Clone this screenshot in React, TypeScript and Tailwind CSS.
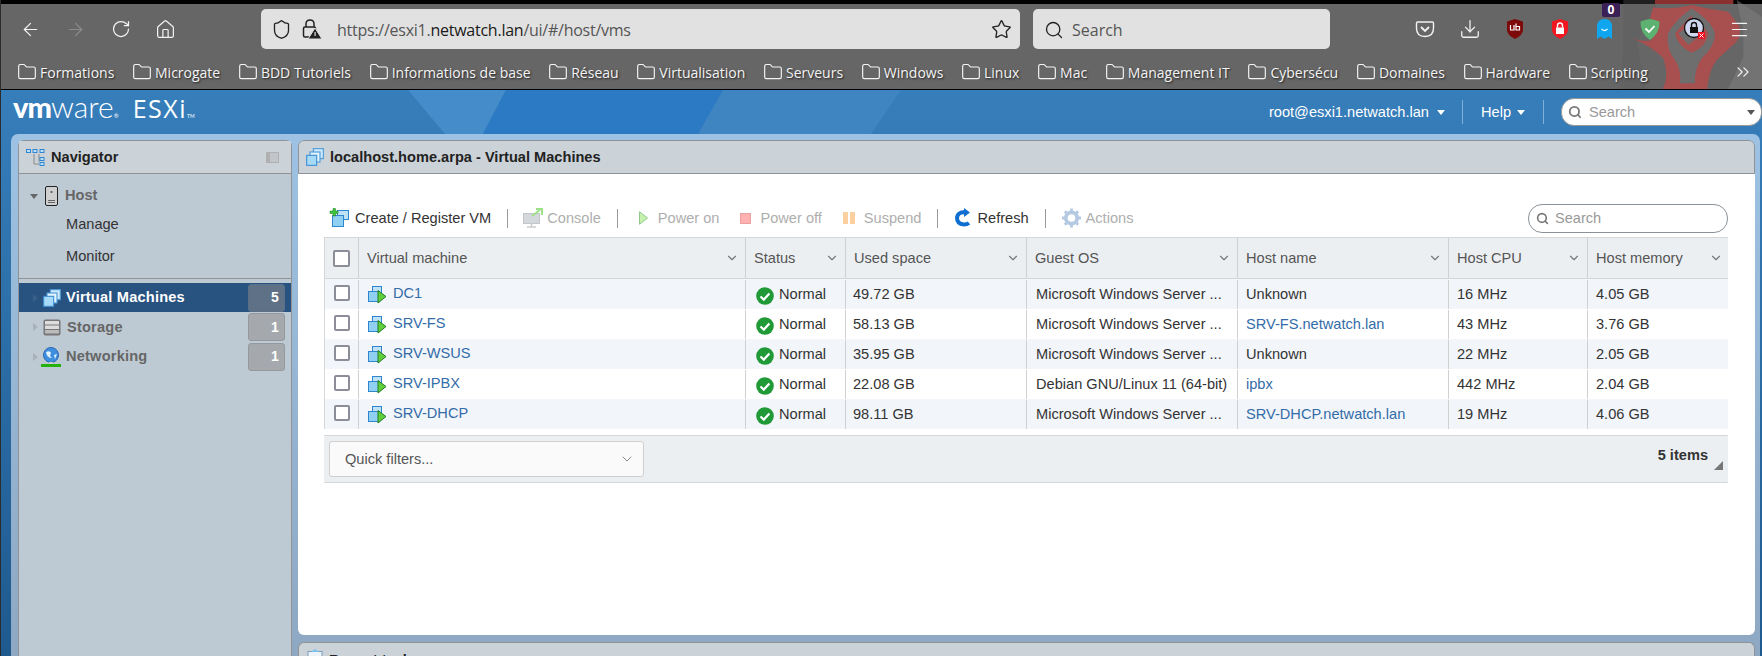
import { ArrowLeft, ArrowRight, ChevronDown, ChevronsRight, Download, Folder, Home, Menu, RotateCw, Search, Shield, Star } from "lucide-react"

const bookmarks = ["Formations", "Microgate", "BDD Tutoriels", "Informations de base", "Réseau", "Virtualisation", "Serveurs", "Windows", "Linux", "Mac", "Management IT", "Cybersécu", "Domaines", "Hardware", "Scripting"]

const columns = ["Virtual machine", "Status", "Used space", "Guest OS", "Host name", "Host CPU", "Host memory"]

const WINDOWS = "Microsoft Windows Server ..."

const vms = [
  { name: "DC1", used: "49.72 GB", os: WINDOWS, host: "Unknown", link: false, cpu: "16 MHz", mem: "4.05 GB" },
  { name: "SRV-FS", used: "58.13 GB", os: WINDOWS, host: "SRV-FS.netwatch.lan", link: true, cpu: "43 MHz", mem: "3.76 GB" },
  { name: "SRV-WSUS", used: "35.95 GB", os: WINDOWS, host: "Unknown", link: false, cpu: "22 MHz", mem: "2.05 GB" },
  { name: "SRV-IPBX", used: "22.08 GB", os: "Debian GNU/Linux 11 (64-bit)", host: "ipbx", link: true, cpu: "442 MHz", mem: "2.04 GB" },
  { name: "SRV-DHCP", used: "98.11 GB", os: WINDOWS, host: "SRV-DHCP.netwatch.lan", link: true, cpu: "19 MHz", mem: "4.06 GB" },
]

const GRID = "grid grid-cols-[34px_387px_100px_181px_211px_211px_139px_141px]"

function VmsIcon({ size = 20 }: { size?: number }) {
  return (
    <svg width={size} height={size} viewBox="0 0 18 18" className="shrink-0">
      <rect x="7.5" y="1.5" width="9" height="9" fill="#cfe9fa" stroke="#4a9ad8" />
      <rect x="4.5" y="4.5" width="9" height="9" fill="#e2f3fc" stroke="#4a9ad8" />
      <rect x="1.5" y="7.5" width="9" height="9" fill="#a6daf6" stroke="#3f90d2" />
    </svg>
  )
}

function VmOnIcon() {
  return (
    <svg width="19" height="18" viewBox="0 0 19 18" className="shrink-0">
      <rect x="4.5" y="0.5" width="9" height="9" fill="#bfe2f8" stroke="#2f86cf" />
      <rect x="0.5" y="5.5" width="11" height="10" fill="#8fd0f3" stroke="#2f86cf" />
      <path d="M10 4.5 L18 10.5 L10 17 Z" fill="#5fce3a" stroke="#1f7d24" />
    </svg>
  )
}

function StatusIcon() {
  return (
    <svg width="18" height="18" viewBox="0 0 18 18" className="mt-[2px] shrink-0">
      <circle cx="9" cy="9" r="8.8" fill="#1f9a37" />
      <path d="M4.5 9.5 L7.8 12.6 L13.4 6.6" fill="none" stroke="#fff" strokeWidth="2.2" />
    </svg>
  )
}

function Caret({ className }: { className: string }) {
  return <span className={`inline-block border-x-[4.5px] border-t-[5px] border-x-transparent ${className}`} />
}

function Sep() {
  return <span className="h-[19px] w-px bg-[#9a9a9a]" />
}

function ToolbarItem({ icon, label, off, gap = "gap-[5px]" }: { icon: React.ReactNode; label: string; off?: boolean; gap?: string }) {
  return (
    <span className={`flex items-center ${gap} ${off ? "text-[#aeaeae]" : "text-[#333]"}`}>
      {icon}
      {label}
    </span>
  )
}

function NavBadge({ n, active }: { n: number; active?: boolean }) {
  return (
    <span className={`flex h-[28px] w-[37px] items-center justify-end rounded-[3px] border pr-[5px] text-[14px] font-bold text-white ${active ? "border-[#5a6f88] bg-[#5f7186]" : "border-[#94999e] bg-[#a5a9ad]"}`}>
      {n}
    </span>
  )
}

function Horde() {
  return (
    <svg width="282" height="92" viewBox="0 0 846 276" className="absolute right-0 top-0">
      <path d="M430 0 H540 L500 60 L470 130 L500 276 H420 L430 140 Z" fill="#5c5c5c" opacity="0.35" />
      <path d="M770 0 L846 50 V276 H740 L790 170 L790 90 Z" fill="#808080" opacity="0.5" />
      <g transform="translate(420 0)">
        <path d="M105 0 H340 V12 H105 Z" fill="#8a3030" />
        <path d="M100 22 Q150 30 215 15 Q280 30 325 35 Q345 60 358 78 Q365 110 345 130 L300 170 Q270 195 262 262 L265 276 H125 L135 250 Q145 215 130 175 Q90 135 35 115 Q70 128 95 120 Q80 70 100 22 Z" fill="#a84f4f" />
        <path d="M215 25 Q155 70 143 105 Q140 150 165 180 Q185 210 180 250 H225 Q222 210 245 175 Q285 140 285 100 Q275 65 215 25 Z" fill="#6e6e6e" />
        <path d="M212 48 L165 100 Q170 130 200 150 L215 158 Q260 140 265 100 Q250 75 212 48 Z" fill="#a84f4f" />
        <path d="M210 75 L175 100 L205 135 L240 105 Z" fill="#6e6e6e" />
      </g>
    </svg>
  )
}

function HeaderShapes() {
  return (
    <svg width="1762" height="44" viewBox="0 0 1762 44" className="absolute left-0 top-0">
      <path d="M407 0 H505 L482 44 H444 Z" fill="#448dca" />
      <path d="M505 0 H722 L697 44 H482 Z" fill="#2c79c4" />
      <path d="M722 0 H900 L870 44 H697 Z" fill="#3f85c2" />
    </svg>
  )
}

export default function App() {
  return (
    <div className="flex h-[656px] w-[1762px] flex-col overflow-hidden border-l border-[#2c2c2c] bg-gradient-to-b from-[#3a84c2] to-[#1f5a8f] font-['Liberation_Sans',Arial,sans-serif] text-[14.6px] text-[#333]">
      {/* browser chrome */}
      <div className="relative -ml-px h-[90px] shrink-0 overflow-hidden border-b border-black bg-[#666] pt-[4px] font-['Open_Sans',sans-serif]">
        <div className="absolute inset-x-0 top-0 h-[4px] bg-black" />
        <Horde />
        <div className="relative flex h-[50px] items-center pl-[8px] pt-[5px] pb-[5px]">
          <div className="flex text-[#f2f2f2]">
            <span className="flex w-[45px] justify-center"><ArrowLeft size={21} strokeWidth={1.4} /></span>
            <span className="flex w-[45px] justify-center text-[#8c8c8c]"><ArrowRight size={21} strokeWidth={1.4} /></span>
            <span className="flex w-[45px] justify-center"><RotateCw size={20} strokeWidth={1.5} /></span>
            <span className="flex w-[45px] justify-center"><Home size={21} strokeWidth={1.4} /></span>
          </div>
          <div className="ml-[73px] flex h-[40px] w-[759px] items-center rounded-[5px] bg-[#e1e1e1] text-[#222]">
            <Shield size={21} strokeWidth={1.5} className="ml-[10px]" />
            <svg width="22" height="22" viewBox="0 0 22 22" className="ml-[9px] shrink-0">
              <path d="M5 9 V6 Q5 2 9 2 Q13 2 13 6 V9" fill="none" stroke="#222" strokeWidth="1.5" />
              <rect x="2.5" y="9" width="12" height="10" rx="1.5" fill="none" stroke="#222" strokeWidth="1.5" />
              <path d="M14 10 L21 21 H7 Z" fill="#222" stroke="#e1e1e1" />
              <rect x="13.5" y="14" width="1.2" height="4" fill="#e1e1e1" />
            </svg>
            <span className="ml-[14px] pt-[1px] text-[16px] tracking-[-0.25px] text-[#555]">https://esxi1.<span className="text-[#1a1a1a]">netwatch.lan</span>/ui/#/host/vms</span>
            <Star size={21} strokeWidth={1.5} className="ml-auto mr-[8px]" />
          </div>
          <div className="ml-[13px] flex h-[40px] w-[297px] items-center rounded-[5px] bg-[#e1e1e1] pt-[1px] text-[16px] text-[#555]">
            <Search size={20} strokeWidth={1.6} className="ml-[11px] text-[#222]" />
            <span className="ml-[8px]">Search</span>
          </div>
          <div className="ml-[72px] flex items-center text-[#f2f2f2]">
            <span className="flex w-[45px] justify-center">
              <svg width="20" height="20" viewBox="0 0 20 20" fill="none" stroke="currentColor" strokeWidth="1.4">
                <path d="M2.5 3 H17.5 Q18.5 3 18.5 4.5 V9 Q18.5 17.5 10 17.5 Q1.5 17.5 1.5 9 V4.5 Q1.5 3 2.5 3 Z" />
                <path d="M6 8 L10 12 L14 8" strokeWidth="1.8" />
              </svg>
            </span>
            <span className="flex w-[45px] justify-center"><Download size={22} strokeWidth={1.4} /></span>
            <span className="flex w-[45px] justify-center">
              <svg width="18" height="20" viewBox="0 0 18 20">
                <path d="M9 0 L17 2.5 V11 Q17 16 9 20 Q1 16 1 11 V2.5 Z" fill="#7d0a0a" />
                <path d="M4.5 6 V11 H8 V6 M10 4.5 V11 H13.5 V7.5 H10" fill="none" stroke="#fff" strokeWidth="1.2" />
              </svg>
            </span>
            <span className="flex w-[45px] justify-center">
              <svg width="18" height="20" viewBox="0 0 18 20">
                <path d="M9 0 L17 2.5 V11 Q17 16 9 20 Q1 16 1 11 V2.5 Z" fill="#f01820" />
                <rect x="5" y="8.5" width="8" height="6.5" fill="#fff" />
                <path d="M6.5 8.5 V6.5 Q6.5 4 9 4 Q11.5 4 11.5 6.5 V8.5" fill="none" stroke="#fff" strokeWidth="1.4" />
              </svg>
            </span>
            <span className="relative flex w-[45px] justify-center">
              <svg width="15" height="20" viewBox="0 0 15 20">
                <path d="M7.5 0 Q15 0 15 8 V20 L11.5 17.5 L7.5 20 L3.5 17.5 L0 20 V8 Q0 0 7.5 0 Z" fill="#0fa6ef" />
                <path d="M4.5 10 Q7.5 13 10.5 10" fill="none" stroke="#dff4ff" strokeWidth="1.4" />
              </svg>
              <span className="absolute -top-[16px] left-[20px] flex h-[14px] w-[18px] items-center justify-center rounded-[2px] bg-[#3b1f57] text-[12px] font-bold leading-none text-white">0</span>
            </span>
            <span className="flex w-[45px] justify-center">
              <svg width="20" height="21" viewBox="0 0 20 21">
                <path d="M10 0 Q15 0.5 19.5 2.5 Q20 14 10 21 Q0 14 0.5 2.5 Q5 0.5 10 0 Z" fill="#5cb270" />
                <path d="M5.5 9.5 L9 13 L14.5 7" fill="none" stroke="#fff" strokeWidth="1.8" />
              </svg>
            </span>
            <span className="flex w-[45px] justify-center">
              <svg width="22" height="22" viewBox="0 0 22 22">
                <circle cx="10" cy="10" r="9.5" fill="#cfd8ee" stroke="#111" strokeWidth="1.3" />
                <rect x="6" y="9" width="8" height="6" fill="#111" />
                <path d="M7.5 9 V7 Q7.5 4.5 10 4.5 Q12.5 4.5 12.5 7 V9" fill="none" stroke="#111" strokeWidth="1.4" />
                <rect x="14" y="14" width="7" height="7" fill="#ee1122" />
                <path d="M15.5 15.5 L19.5 19.5 M19.5 15.5 L15.5 19.5" stroke="#fff" strokeWidth="1" />
              </svg>
            </span>
            <span className="flex w-[45px] justify-center"><Menu size={21} strokeWidth={1.4} /></span>
          </div>
        </div>
        <div className="relative flex h-[35px] items-center pl-[17px] pt-[1px] text-[14px] text-[#f4f4f4] [text-shadow:1px_1px_2px_#222]">
          {bookmarks.map((b) => (
            <span key={b} className="mr-[17.7px] flex items-center gap-[3px]">
              <Folder size={20} strokeWidth={1.4} />
              {b}
            </span>
          ))}
          <ChevronsRight size={20} strokeWidth={1.4} className="absolute left-[1733px]" />
        </div>
      </div>

      {/* esxi header */}
      <div className="relative flex h-[44px] shrink-0 items-center pl-[12px] text-white">
        <HeaderShapes />
        <div className="relative flex items-baseline pt-[4px] font-['Lato',sans-serif]">
          <span className="text-[29px] font-black leading-none tracking-[-1px]">vm</span>
          <span className="text-[30px] font-light leading-none">ware</span>
          <span className="mb-[14px] text-[6px]">®</span>
          <span className="ml-[14px] font-['Open_Sans',sans-serif] text-[25px] leading-none tracking-[1.5px]">ESXi</span>
          <span className="mb-[16px] text-[5px]">TM</span>
        </div>
        <div className="relative ml-auto flex items-center">
          <span className="pt-[2px]">root@esxi1.netwatch.lan</span>
          <Caret className="ml-[8px] border-t-white" />
          <span className="ml-[17px] h-[24px] w-px bg-[#7fb0d8]" />
          <span className="ml-[18px] pt-[2px]">Help</span>
          <Caret className="ml-[6px] border-t-white" />
          <span className="ml-[18px] h-[24px] w-px bg-[#7fb0d8]" />
          <div className="ml-[17px] flex h-[28px] w-[201px] items-center rounded-[13px] border border-[#999] bg-white text-[#999]">
            <Search size={14} strokeWidth={3} className="ml-[6px] text-[#777]" />
            <span className="ml-[7px] pt-[1px]">Search</span>
            <Caret className="ml-auto mr-[6px] border-t-[#555]" />
          </div>
        </div>
      </div>

      {/* workspace */}
      <div className="ml-[10px] mr-[2px] flex min-h-0 flex-1 gap-[6px] rounded-t-[7px] bg-gradient-to-b from-[#9dc2e3] to-[#8ea8c3] pl-[7px] pr-[5px] pt-[6px]">
        <div className="flex w-[274px] shrink-0 flex-col rounded-t-[6px] border border-b-0 border-[#8f9397] bg-[#bdc9d3]">
          <div className="flex h-[33px] shrink-0 items-center border-b border-[#8f9397] bg-[#ccd3d8] pl-[7px] pr-[12px] font-bold text-[#222]">
            <svg width="20" height="18" viewBox="0 0 20 18" className="shrink-0">
              <path d="M13 6 V14 M8 6 V16 H13" fill="none" stroke="#888" />
              <g fill="#bde0f7" stroke="#2f86cf">
                <rect x="0.5" y="1.5" width="4" height="3" />
                <rect x="7" y="1.5" width="4" height="3" />
                <rect x="14" y="1.5" width="4" height="3" />
                <rect x="14" y="9.5" width="4" height="3" />
                <rect x="14" y="14.5" width="4" height="3" />
              </g>
            </svg>
            <span className="ml-[5px] pt-[2px]">Navigator</span>
            <span className="ml-auto h-[11px] w-[13px] border border-[#b0b0b0] border-l-[4px] bg-[#c2c6ca]" />
          </div>
          <div className="mt-[10px] flex h-[24px] shrink-0 items-center pl-[11px] font-bold text-[#666]">
            <Caret className="border-t-[#666]" />
            <svg width="13" height="20" viewBox="0 0 13 20" className="ml-[7px] shrink-0">
              <rect x="0.5" y="0.5" width="12" height="19" rx="1.5" fill="#cfcfcf" stroke="#222" />
              <rect x="3" y="14" width="7" height="1" fill="#666" />
              <rect x="3" y="16" width="7" height="1" fill="#666" />
              <rect x="5.5" y="5" width="2" height="2" fill="#666" />
            </svg>
            <span className="ml-[7px]">Host</span>
          </div>
          <div className="flex h-[32px] shrink-0 items-center pl-[47px] pt-[1px] text-[#333]">Manage</div>
          <div className="flex h-[33px] shrink-0 items-center pl-[47px] pt-[1px] text-[#333]">Monitor</div>
          <div className="mt-[5px] h-[5px] shrink-0 border-t border-[#8f9397]" />
          <div className="flex h-[29px] shrink-0 items-center bg-[#28527f] pl-[14px] pr-[6px] font-bold tracking-[0.2px] text-white">
            <span className="border-y-[4.5px] border-l-[5px] border-y-transparent border-l-[#3a5f88]" />
            <span className="ml-[4px]"><VmsIcon /></span>
            <span className="ml-[4px] pt-[1px]">Virtual Machines</span>
            <span className="ml-auto"><NavBadge n={5} active /></span>
          </div>
          <div className="flex h-[30px] shrink-0 items-center pl-[14px] pr-[6px] font-bold tracking-[0.2px] text-[#666]">
            <span className="border-y-[4.5px] border-l-[5px] border-y-transparent border-l-[#aab2b9]" />
            <svg width="18" height="17" viewBox="0 0 18 17" className="ml-[5px] shrink-0">
              <rect x="0.5" y="0.5" width="17" height="16" rx="2" fill="#777" />
              <rect x="2" y="2" width="14" height="3.5" fill="#ddd" />
              <rect x="2" y="6.5" width="14" height="3.5" fill="#ddd" />
              <rect x="2" y="11" width="14" height="3.5" fill="#bbb" />
            </svg>
            <span className="ml-[6px] pt-[1px]">Storage</span>
            <span className="ml-auto"><NavBadge n={1} /></span>
          </div>
          <div className="flex h-[29px] shrink-0 items-center pl-[14px] pr-[6px] font-bold tracking-[0.2px] text-[#666]">
            <span className="border-y-[4.5px] border-l-[5px] border-y-transparent border-l-[#aab2b9]" />
            <svg width="20" height="20" viewBox="0 0 20 20" className="ml-[3px] shrink-0">
              <circle cx="10" cy="8" r="7.5" fill="#3f8fe0" stroke="#2a68b0" />
              <path d="M5 5 Q9 3 10 6 Q8 9 11 11 Q6 11 5 5 Z M13 8 L16 7 L14 12 Z" fill="#e6f2fc" />
              <rect x="8" y="15" width="4" height="2" fill="#ccc" />
              <rect x="0" y="17" width="20" height="3" fill="#25b20f" />
            </svg>
            <span className="ml-[5px] pt-[1px]">Networking</span>
            <span className="ml-auto"><NavBadge n={1} /></span>
          </div>
        </div>

        <div className="flex min-w-0 flex-1 flex-col gap-[7px]">
          <div className="flex h-[495px] shrink-0 flex-col overflow-hidden rounded-[6px]">
            <div className="flex h-[34px] shrink-0 items-center gap-[5px] rounded-t-[6px] border border-[#8f9397] bg-[#ccd3d8] pl-[6px] font-bold text-[#222]">
              <VmsIcon />
              <span className="pt-[2px]">localhost.home.arpa - Virtual Machines</span>
            </div>
            <div className="flex-1 bg-white pl-[26px] pr-[27px]">
              <div className="flex h-[63px] items-center pt-[26px]">
                <div className="ml-[5px] flex items-center gap-[16px]">
                  <ToolbarItem
                    label="Create / Register VM"
                    icon={
                      <svg width="21" height="20" viewBox="0 0 21 20" className="shrink-0">
                        <rect x="8.5" y="2.5" width="11" height="9" fill="#bfe2f8" stroke="#2f86cf" />
                        <rect x="3.5" y="7.5" width="11" height="11" fill="#8fd0f3" stroke="#2f86cf" />
                        <path d="M4 0.5 H6.5 V3 H9 V5.5 H6.5 V8 H4 V5.5 H1 V3 H4 Z" fill="#3cc23c" stroke="#1f7d24" strokeWidth="0.5" />
                      </svg>
                    }
                  />
                  <Sep />
                  <ToolbarItem
                    off
                    gap="gap-[4px]"
                    label="Console"
                    icon={
                      <svg width="20" height="20" viewBox="0 0 20 20" className="-ml-[1px] shrink-0 opacity-60">
                        <rect x="0.5" y="5.5" width="16" height="10" fill="#b8bec4" stroke="#9aa0a6" />
                        <path d="M4 19 H13 M8.5 15 V19" stroke="#aaa" strokeWidth="1.5" />
                        <path d="M9 8 L17 2 M13 1 H19 V7" fill="none" stroke="#5fce3a" strokeWidth="2" />
                      </svg>
                    }
                  />
                  <Sep />
                  <div className="ml-[5px] flex items-center gap-[21px]">
                    <ToolbarItem
                      off
                      gap="gap-[10px]"
                      label="Power on"
                      icon={
                        <svg width="9" height="14" viewBox="0 0 9 14" className="shrink-0">
                          <path d="M0.5 0.7 L8.5 7 L0.5 13.3 Z" fill="#c6f0ae" stroke="#90c98a" />
                        </svg>
                      }
                    />
                    <ToolbarItem
                      off
                      gap="gap-[9px]"
                      label="Power off"
                      icon={<span className="h-[11px] w-[11px] shrink-0 border border-[#e8a0a0] bg-[#ffb0b0]" />}
                    />
                    <ToolbarItem
                      off
                      gap="gap-[9px]"
                      label="Suspend"
                      icon={
                        <span className="flex gap-[2px]">
                          <span className="h-[12px] w-[5px] bg-[#fbcf9e]" />
                          <span className="h-[12px] w-[5px] bg-[#fbcf9e]" />
                        </span>
                      }
                    />
                  </div>
                  <Sep />
                  <ToolbarItem
                    gap="gap-[6px]"
                    label="Refresh"
                    icon={
                      <svg width="17" height="20" viewBox="0 0 17 20" className="shrink-0">
                        <path d="M12 4.5 Q3.5 3.5 3 10 Q3 16 10 16.5 Q13 16.5 15 15" fill="none" stroke="#0f6fd0" strokeWidth="4" />
                        <path d="M10 0 L16 4.5 L10 9 Z" fill="#0f6fd0" />
                      </svg>
                    }
                  />
                  <Sep />
                  <ToolbarItem
                    off
                    label="Actions"
                    icon={
                      <svg width="19" height="20" viewBox="0 0 20 20" className="shrink-0">
                        <circle cx="10" cy="10" r="6" fill="none" stroke="#b5c9e2" strokeWidth="4" />
                        <path d="M10 0 V4 M10 16 V20 M0 10 H4 M16 10 H20 M3 3 L6 6 M14 14 L17 17 M3 17 L6 14 M14 6 L17 3" stroke="#b5c9e2" strokeWidth="3" />
                      </svg>
                    }
                  />
                </div>
                <div className="ml-auto -mt-[1px] flex h-[29px] w-[200px] items-center rounded-[14px] border border-[#8b9298] text-[#999]">
                  <Search size={13} strokeWidth={3} className="ml-[7px] text-[#777]" />
                  <span className="ml-[6px] pt-[1px]">Search</span>
                </div>
              </div>

              <div className="border-l border-[#d8d8d8]">
                <div className={`${GRID} h-[42px] border-y border-[#d6d6d6] bg-[#eceff2] text-[#555]`}>
                  <div className="flex items-center justify-center border-r border-[#d0d0d0]">
                    <span className="h-[17px] w-[17px] rounded-[2px] border-2 border-[#8d8d99] bg-white" />
                  </div>
                  {columns.map((c) => (
                    <div key={c} className="flex items-center whitespace-nowrap border-r border-[#d0d0d0] pl-[8px] pr-[6px] last:border-r-0">
                      <span className="pt-[2px]">{c}</span>
                      <ChevronDown size={14} strokeWidth={2} className="ml-auto shrink-0 text-[#777]" />
                    </div>
                  ))}
                </div>
                {vms.map((vm, i) => (
                  <div key={vm.name} className={`${GRID} h-[30px] pt-[1px] ${i % 2 === 0 ? "bg-[#f2f5fa]" : "bg-white"}`}>
                    <div className="flex items-center justify-center border-r border-[#d0d0d0] pb-[3px]">
                      <span className="h-[16px] w-[16px] rounded-[2px] border-2 border-[#8d8d99] bg-white" />
                    </div>
                    <div className="flex items-center gap-[6px] border-r border-[#d0d0d0] pl-[9px] text-[#336ca8]">
                      <VmOnIcon />
                      <span className="pb-[2px]">{vm.name}</span>
                    </div>
                    <div className="flex items-center gap-[5px] border-r border-[#d0d0d0] pl-[10px] text-[#333]">
                      <StatusIcon />
                      <span>Normal</span>
                    </div>
                    <div className="flex items-center border-r border-[#d0d0d0] pl-[7px]">{vm.used}</div>
                    <div className="flex items-center whitespace-nowrap border-r border-[#d0d0d0] pl-[9px]">{vm.os}</div>
                    <div className={`flex items-center border-r border-[#d0d0d0] pl-[8px] ${vm.link ? "text-[#336ca8]" : ""}`}>{vm.host}</div>
                    <div className="flex items-center border-r border-[#d0d0d0] pl-[8px]">{vm.cpu}</div>
                    <div className="flex items-center pl-[8px]">{vm.mem}</div>
                  </div>
                ))}
              </div>

              <div className="relative mt-[6px] flex h-[48px] items-center border border-[#d6d6d6] border-x-[#eceff2] bg-[#eceff2] pl-[4px] pr-[8px]">
                <div className="flex h-[36px] w-[315px] items-center rounded-[3px] border border-[#cfcfcf] bg-[#fafafa] pl-[15px] pr-[8px] text-[#555]">
                  <span className="pt-[1px]">Quick filters...</span>
                  <ChevronDown size={16} strokeWidth={1.5} className="ml-auto text-[#888]" />
                </div>
                <span className="ml-auto mr-[11px] -mt-[6px] font-bold text-[#333]">5 items</span>
                <svg width="9" height="9" viewBox="0 0 9 9" className="absolute bottom-[12px] right-[4px]">
                  <path d="M9 0 V9 H0 Z" fill="#777" />
                </svg>
              </div>
            </div>
          </div>

          <div className="flex h-[30px] shrink-0 items-start gap-[6px] rounded-t-[6px] border border-b-0 border-[#8f9397] bg-[#ccd3d8] pl-[8px] pt-[6px] font-bold text-[#222]">
            <svg width="16" height="18" viewBox="0 0 16 18" className="shrink-0">
              <rect x="1" y="2.5" width="14" height="15" fill="#eef3f8" stroke="#7a9cc0" />
              <path d="M4 3 L8 0 L12 3 Z" fill="#7cc0ee" />
            </svg>
            <span className="pt-[1px]">Recent tasks</span>
          </div>
        </div>
      </div>
    </div>
  )
}
